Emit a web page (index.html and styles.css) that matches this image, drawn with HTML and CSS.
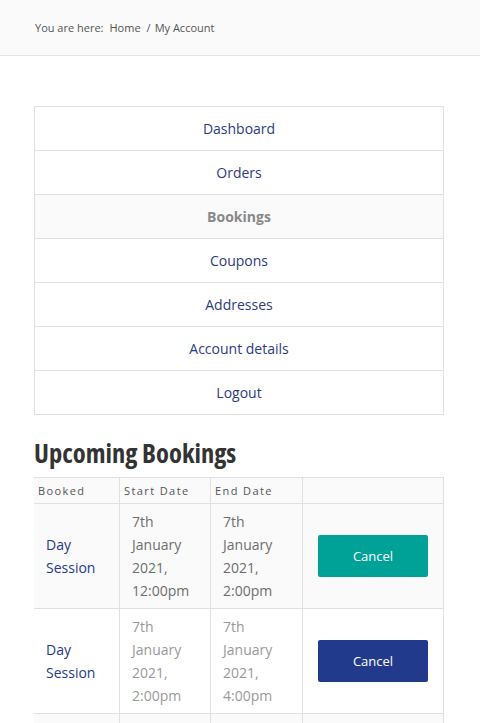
FILE: index.html
```html
<!DOCTYPE html>
<html>
<head lang="en">
    <meta charset="UTF-8">
    <title>My Account</title>
    <link rel="stylesheet" href="styles.css">
</head>
<body>
<div class="crumbs">
    <span>You are here:</span>
    <a href="#">Home</a>
    <span class="sep">/</span>
    <span>My Account</span>
</div>
<div class="page">
    <ul class="nav">
        <li><a href="#">Dashboard</a></li>
        <li><a href="#">Orders</a></li>
        <li class="active"><a href="#">Bookings</a></li>
        <li><a href="#">Coupons</a></li>
        <li><a href="#">Addresses</a></li>
        <li><a href="#">Account details</a></li>
        <li><a href="#">Logout</a></li>
    </ul>
    <h2 class="title">Upcoming Bookings</h2>
    <table class="bookings">
        <thead>
        <tr>
            <th class="c1">Booked</th>
            <th class="c2">Start Date</th>
            <th class="c3">End Date</th>
            <th class="c4"></th>
        </tr>
        </thead>
        <tbody>
        <tr class="odd">
            <td><a href="#">Day Session</a></td>
            <td class="date">7th January 2021, 12:00pm</td>
            <td class="date">7th January 2021, 2:00pm</td>
            <td><a href="#" class="btn teal">Cancel</a></td>
        </tr>
        <tr>
            <td><a href="#">Day Session</a></td>
            <td class="date">7th January 2021, 2:00pm</td>
            <td class="date">7th January 2021, 4:00pm</td>
            <td><a href="#" class="btn navy">Cancel</a></td>
        </tr>
        <tr class="odd">
            <td><a href="#">Day Session</a></td>
            <td class="date">7th January 2021, 4:00pm</td>
            <td class="date">7th January 2021, 6:00pm</td>
            <td><a href="#" class="btn navy">Cancel</a></td>
        </tr>
        </tbody>
    </table>
</div>
</body>
</html>
```

FILE: styles.css
```css
* {
    margin: 0;
    padding: 0;
}
body {
    font-family: "Open Sans", "Noto Sans", sans-serif;
    font-size: 14px;
    color: #666;
    background: #fff;
}
a {
    text-decoration: none;
    color: #26398a;
}
.crumbs {
    height: 55px;
    background: #fafafa;
    border-bottom: 1px solid #e5e5e5;
    display: flex;
    align-items: center;
    padding-left: 35px;
    font-size: 11px;
    color: #555;
}
.crumbs a {
    color: #555;
    margin-left: 6px;
}
.crumbs .sep {
    margin: 0 4px 0 6px;
}
.page {
    padding: 50px 36px 0 34px;
}
.nav {
    list-style: none;
    border: 1px solid #e0e0e0;
    border-bottom: 0;
    display: flex;
    flex-direction: column;
}
.nav li {
    height: 43px;
    border-bottom: 1px solid #e0e0e0;
    display: flex;
    align-items: center;
    justify-content: center;
}
.nav li a {
    color: #2d3b80;
}
.nav li.active {
    background: #fafafa;
}
.nav li.active a {
    color: #888;
    font-weight: 700;
}
.title {
    font-size: 26.5px;
    font-weight: 700;
    font-stretch: 75%;
    color: #333;
    margin: 22px 0 8px;
    line-height: 32px;
}
.bookings {
    width: 410px;
    border-collapse: collapse;
    table-layout: fixed;
}
.bookings th {
    height: 25px;
    background: #fafafa;
    border-top: 1px solid #e0e0e0;
    border-bottom: 1px solid #e0e0e0;
    border-right: 1px solid #e0e0e0;
    text-align: left;
    font-weight: 400;
    font-size: 11px;
    letter-spacing: 1.4px;
    color: #555;
    padding: 0 4px;
}
.bookings .c1 { width: 77px; }
.bookings .c2 { width: 82px; }
.bookings .c3 { width: 83px; }
.bookings td {
    border-right: 1px solid #e0e0e0;
    border-bottom: 1px solid #e0e0e0;
    padding: 6px 12px;
    line-height: 23px;
    vertical-align: middle;
}
.bookings td.date {
    color: #999;
}
.bookings tr.odd td {
    background: #fafafa;
}
.bookings tr.odd td.date {
    color: #6e6e6e;
}
.bookings td:last-child {
    padding: 0 15px 0 15px;
}
.btn {
    display: flex;
    align-items: center;
    justify-content: center;
    height: 42px;
    border-radius: 2px;
    color: #fff;
    font-size: 13px;
}
.teal {
    background: #00a197;
}
.navy {
    background: #223a8b;
}
```
